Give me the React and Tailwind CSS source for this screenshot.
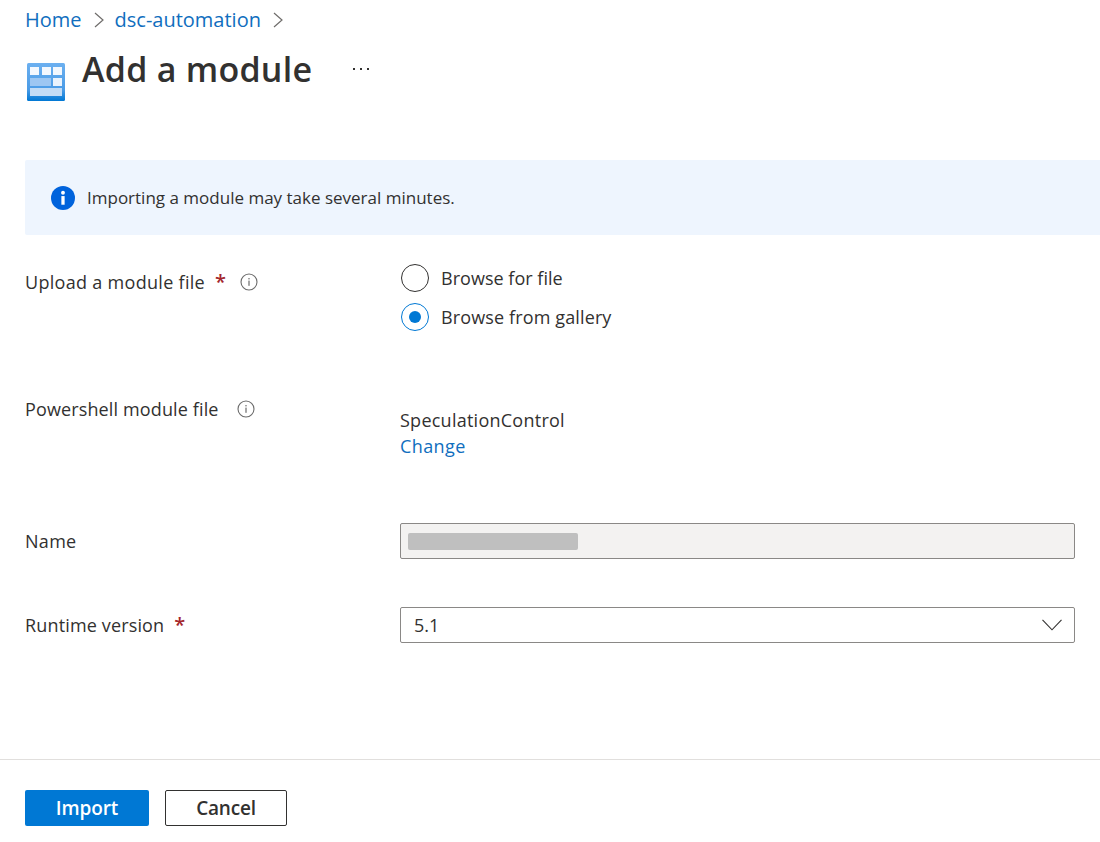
const font = { fontFamily: '"Open Sans", "Noto Sans", sans-serif' }

function ModuleIcon() {
    return (
        <svg width="38" height="38" viewBox="0 0 38 38" className="shrink-0">
            <defs>
                <linearGradient id="mod" x1="0" y1="0" x2="0" y2="1">
                    <stop offset="0" stopColor="#6cb0f0" />
                    <stop offset="0.7" stopColor="#4a9be6" />
                    <stop offset="1" stopColor="#0078d4" />
                </linearGradient>
            </defs>
            <rect width="38" height="38" rx="1.5" fill="url(#mod)" />
            <rect x="3" y="4" width="9" height="8" fill="#f3f8fe" />
            <rect x="15" y="4" width="9" height="8" fill="#f3f8fe" />
            <rect x="26" y="4" width="9" height="8" fill="#f3f8fe" />
            <rect x="3" y="15" width="21" height="8" fill="#9cc6f2" />
            <rect x="26" y="15" width="9" height="8" fill="#eaf3fd" />
            <rect x="3" y="25" width="32" height="8" fill="#c2dcf6" />
        </svg>
    )
}

function InfoOutline() {
    return (
        <svg width="18" height="18" viewBox="0 0 18 18" className="shrink-0">
            <circle cx="9" cy="9" r="8" fill="none" stroke="#6b6b6b" strokeWidth="1.1" />
            <rect x="8.4" y="7.6" width="1.2" height="5.2" fill="#6b6b6b" />
            <rect x="8.4" y="5" width="1.2" height="1.4" fill="#6b6b6b" />
        </svg>
    )
}

function Crumb({ className }) {
    return (
        <svg width="10" height="16" viewBox="0 0 10 16" className={className}>
            <path d="M1 1l8 7-8 7" fill="none" stroke="#6f6d6b" strokeWidth="1.2" />
        </svg>
    )
}

function Radio({ checked, label, track }) {
    return (
        <div className="flex items-center gap-[12px] h-[28px] ml-[1px]">
            <span className={`w-[28px] h-[28px] rounded-full border flex items-center justify-center ${checked ? 'border-[#0078d4]' : 'border-[#323130]'}`}>
                {checked && <span className="w-[12px] h-[12px] rounded-full bg-[#0078d4]" />}
            </span>
            <span className={`text-[18px] text-[#323130] ${track}`}>{label}</span>
        </div>
    )
}

const Label = ({ children, track }) => (
    <span className={`text-[18px] text-[#323130] leading-[24px] ${track}`}>{children}</span>
)

const Star = () => <span className="text-[20px] leading-[24px] text-[#a4262c] font-semibold">*</span>

export default function App() {
    return (
        <div className="w-[1100px] h-[842px] bg-white overflow-hidden flex flex-col" style={font}>
            <div className="flex items-center h-[24px] mt-[8px] ml-[25px] text-[20px] text-[#106ebe]">
                <span>Home</span>
                <Crumb className="ml-[12px] mr-[11px]" />
                <span>dsc-automation</span>
                <Crumb className="ml-[12px]" />
            </div>

            <div className="flex items-start ml-[27px] mt-[10px] h-[118px]">
                <div className="mt-[21px]"><ModuleIcon /></div>
                <h1 className="ml-[17px] text-[34px] leading-[54px] font-semibold text-[#323130] tracking-[0.25px]">Add a module</h1>
                <div className="ml-[41px] mt-[26px] flex gap-[5px]">
                    <span className="w-[2px] h-[2px] bg-[#323130]" />
                    <span className="w-[2px] h-[2px] bg-[#323130]" />
                    <span className="w-[2px] h-[2px] bg-[#323130]" />
                </div>
            </div>

            <div className="ml-[25px] h-[75px] bg-[#eef5fe] rounded-l-[2px] flex items-center pl-[26px]">
                <svg width="24" height="24" viewBox="0 0 25 25" className="shrink-0">
                    <circle cx="12.5" cy="12.5" r="12.5" fill="#0063dc" />
                    <rect x="10.8" y="10.5" width="3.4" height="9" fill="#fff" />
                    <circle cx="12.5" cy="7" r="2" fill="#fff" />
                </svg>
                <span className="ml-[12px] text-[17px] text-[#323130]">Importing a module may take several minutes.</span>
            </div>

            <div className="ml-[25px] mt-[29px] grid grid-cols-[375px_675px]">
                <div className="flex items-center gap-[10px] h-[36px]">
                    <Label track="tracking-[0.3px]">Upload a module file</Label>
                    <Star />
                    <span className="ml-[4px]"><InfoOutline /></span>
                </div>
                <div className="flex flex-col gap-[11px]">
                    <Radio label="Browse for file" track="tracking-[0.03px]" />
                    <Radio checked label="Browse from gallery" track="tracking-[0.13px]" />
                </div>
            </div>

            <div className="ml-[25px] mt-[66px] grid grid-cols-[375px_675px]">
                <div className="flex items-center gap-[18px] h-[24px]">
                    <Label track="tracking-[0.13px]">Powershell module file</Label>
                    <InfoOutline />
                </div>
                <div className="flex flex-col pt-[10px]">
                    <span className="text-[18px] leading-[26px] text-[#323130] tracking-[0.25px]">SpeculationControl</span>
                    <span className="text-[18px] leading-[26px] text-[#106ebe] tracking-[0.4px]">Change</span>
                </div>
            </div>

            <div className="ml-[25px] mt-[64px] grid grid-cols-[375px_675px] items-center">
                <Label track="tracking-[0.3px]">Name</Label>
                <div className="h-[36px] rounded-[2px] border border-[#8a8886] bg-[#f3f2f1] flex items-center pl-[7px]">
                    <span className="block w-[170px] h-[17px] rounded-[2px] bg-[#bfbfbf]" />
                </div>
            </div>

            <div className="ml-[25px] mt-[48px] grid grid-cols-[375px_675px] items-center">
                <div className="flex items-center gap-[10px]">
                    <Label track="tracking-[0.15px]">Runtime version</Label>
                    <Star />
                </div>
                <div className="h-[36px] rounded-[2px] border border-[#8a8886] bg-white flex items-center justify-between pl-[13px] pr-[12px]">
                    <span className="text-[18px] text-[#323130]">5.1</span>
                    <svg width="20" height="12" viewBox="0 0 20 12" className="shrink-0">
                        <path d="M0.5 0.8L10 10.8L19.5 0.8" fill="none" stroke="#323130" strokeWidth="1.1" />
                    </svg>
                </div>
            </div>

            <div className="mt-[116px] border-t border-[#e1dfdd] pt-[30px] pl-[25px] flex gap-[16px]">
                <button className="w-[124px] h-[36px] rounded-[2px] bg-[#0078d4] text-white text-[19px] font-semibold tracking-[-0.1px]">Import</button>
                <button className="w-[122px] h-[36px] rounded-[2px] border border-[#323130] bg-white text-[#323130] text-[19px] font-semibold tracking-[-0.2px]">Cancel</button>
            </div>
        </div>
    )
}
